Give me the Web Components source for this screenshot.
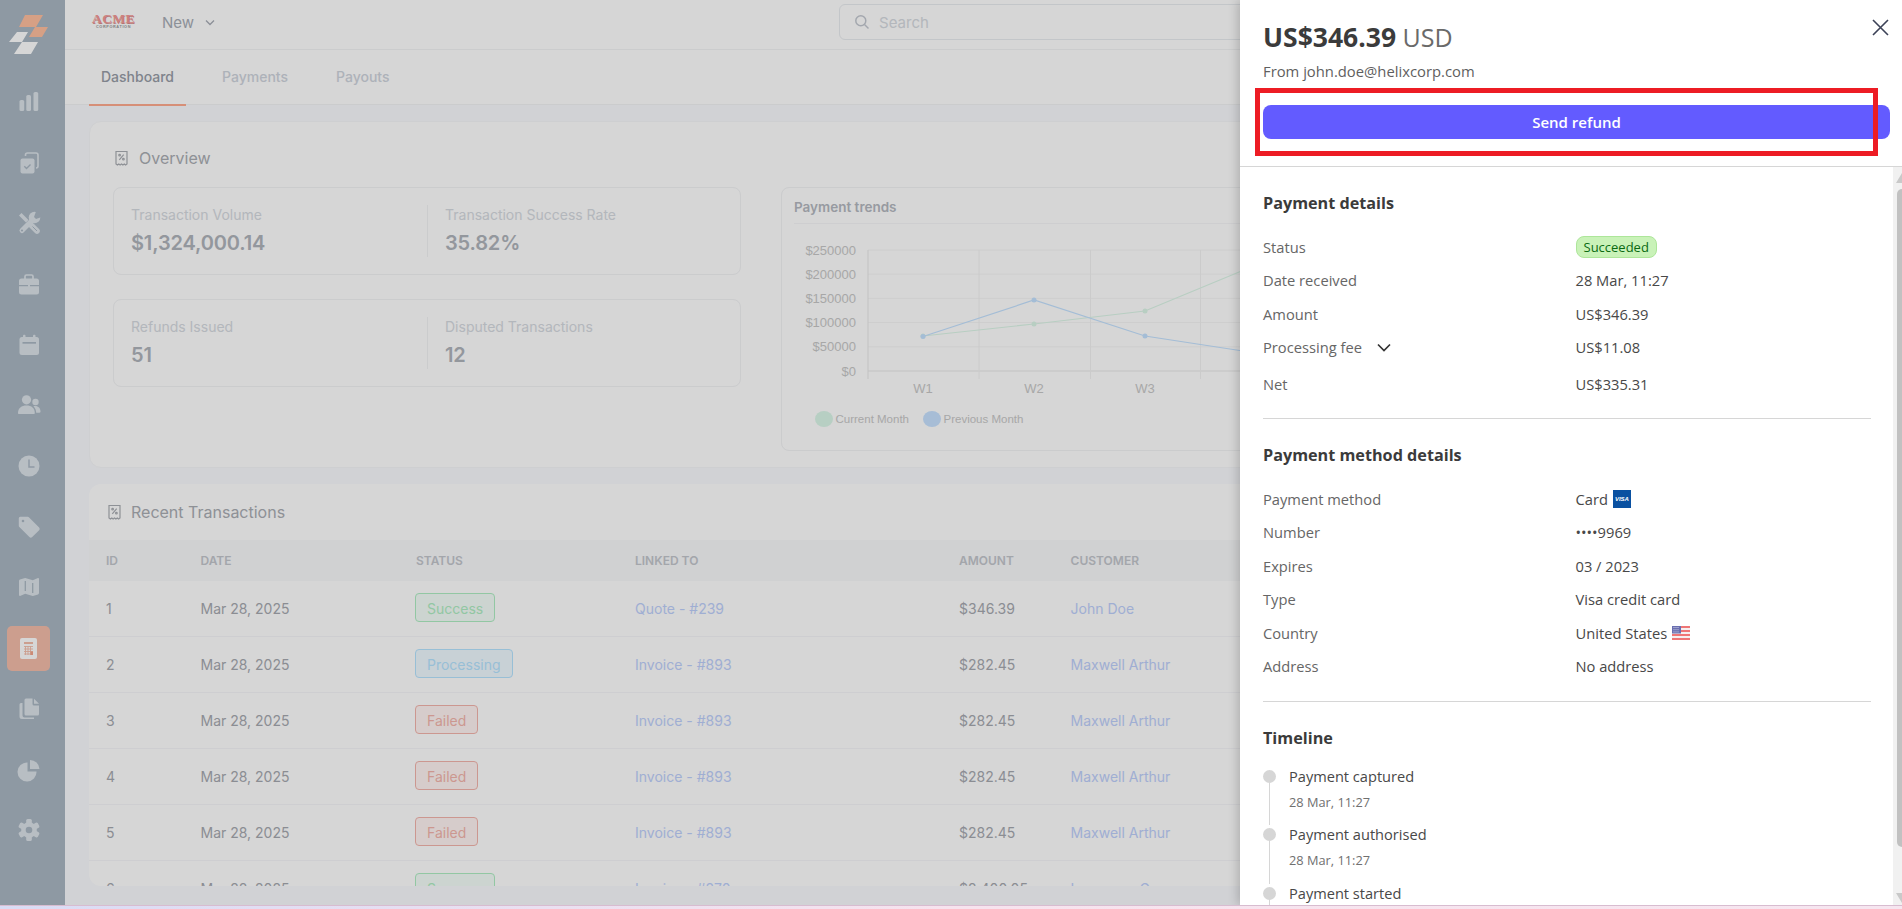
<!DOCTYPE html>
<html lang="en">
<head>
<meta charset="utf-8">
<title>Payments</title>
<style>
  html, body { margin: 0; height: 100%; overflow: hidden; }
  body {
    background: linear-gradient(90deg, #d9dcf5, #f7e3ee 50%, #f6e6f0);
    font-family: Inter, "Liberation Sans", sans-serif;
  }
</style>
</head>
<body>
<app-shell>
  <side-nav slot="side"></side-nav>
  <top-bar></top-bar>
  <page-tabs></page-tabs>
  <page-content>
    <overview-card></overview-card>
    <transactions-card></transactions-card>
  </page-content>
  <refund-drawer slot="drawer"></refund-drawer>
</app-shell>

<script>
const receiptIcon = `<svg width="13" height="16" viewBox="0 0 13 16" fill="none" stroke="currentColor" stroke-width="1.2" style="flex:none">
  <path d="M1 14V1.500h11V14l-1.400 1-1.300-1-1.400 1-1.400-1-1.400 1-1.300-1-1.400 1z"/>
  <path d="M4.300 9.800l4.400-5.200"/><circle cx="4.600" cy="5.200" r=".8"/><circle cx="8.400" cy="9.200" r=".8"/>
</svg>`;

const navIcons = {
  chart: `<rect x="2.500" y="10" width="4.700" height="11" rx="1.600"/><rect x="9.300" y="5" width="4.700" height="16" rx="1.600"/><rect x="16.500" y="2" width="4.700" height="19" rx="1.600"/>`,
  tasks: `<path d="M8.500 5V4a2 2 0 0 1 2-2h8.500a2 2 0 0 1 2 2v11a2 2 0 0 1-2 2" fill="none" stroke="currentColor" stroke-width="1.600"/><rect x="3.500" y="7.500" width="14" height="15" rx="2"/><path d="M7.300 15.200l2.200 2.200 4-4" fill="none" stroke="var(--cut)" stroke-width="1.400"/>`,
  tools: `<path d="M5 19.500L14.500 10" stroke="currentColor" stroke-width="5" stroke-linecap="round"/><circle cx="17.500" cy="6.500" r="5.800"/><path d="M17 6l2.500-7L26 5.500l-7 2.500z" fill="var(--cut)"/><circle cx="5" cy="19.500" r="1.100" fill="var(--cut)"/><path d="M2 4.500L4.500 2l7 7-2.500 2.500z"/><path d="M14.500 14.500l5.500 5.500" stroke="currentColor" stroke-width="5.600" stroke-linecap="round"/><path d="M15.500 15.500l4.500 4.500" stroke="var(--cut)" stroke-width="1"/>`,
  case: `<path d="M8 7V4.500A1.500 1.500 0 0 1 9.500 3h5A1.500 1.500 0 0 1 16 4.500V7" fill="none" stroke="currentColor" stroke-width="1.700"/><path d="M2 9a2.500 2.500 0 0 1 2.500-2.500h15A2.500 2.500 0 0 1 22 9v4H2z"/><path d="M2 14.300h20V20a2.500 2.500 0 0 1-2.500 2.500h-15A2.500 2.500 0 0 1 2 20z"/><rect x="11" y="12.300" width="2" height="3"/>`,
  calendar: `<rect x="2.500" y="4" width="19.500" height="18" rx="2.500"/><rect x="6" y="1.800" width="2.500" height="4" rx="1"/><rect x="16" y="1.800" width="2.500" height="4" rx="1"/><rect x="5.500" y="9" width="13.500" height="1.700" fill="var(--cut)"/>`,
  people: `<circle cx="9.500" cy="6.800" r="4.600"/><path d="M1 20c0-5 3.500-7.500 8.500-7.500S17.800 15 17.800 20c0 .6-.5 1-1 1H2c-.6 0-1-.4-1-1z"/><circle cx="18.500" cy="9" r="3.200"/><path d="M16.500 13.200c4-1 7 1.500 7 5.300 0 .8-.5 1.200-1 1.200h-3.300c0-2.500-1-4.700-2.700-6.500z"/>`,
  clock: `<circle cx="12" cy="12" r="10.500"/><path d="M12 5.500V13h5.500" fill="none" stroke="var(--cut)" stroke-width="1.500"/>`,
  tag: `<path d="M1.800 3.300A1.500 1.500 0 0 1 3.300 1.800h7.400a2 2 0 0 1 1.400.6l10 10a2 2 0 0 1 0 2.800l-6.900 6.900a2 2 0 0 1-2.800 0l-10-10a2 2 0 0 1-.6-1.400z"/><circle cx="6" cy="6" r="1.300" fill="var(--cut)"/>`,
  map: `<path d="M2 6a1.500 1.500 0 0 1 1-1.400L8.200 3l7.600 2.200L21 3.100c.5-.2 1 .2 1 .8v14.100a1.500 1.500 0 0 1-1 1.400L15.800 21l-7.600-2.200L3 20.900c-.5.200-1-.2-1-.8z"/><path d="M8.300 6v10M15.700 8v10" stroke="var(--cut)" stroke-width="1.300"/>`,
  copy: `<path d="M9 1.500h6.500V7a1.500 1.500 0 0 0 1.500 1.500h5V17a1.500 1.500 0 0 1-1.500 1.500H9A1.500 1.500 0 0 1 7.500 17V3A1.500 1.500 0 0 1 9 1.500z"/><path d="M17 1.800L22 6.700h-5z"/><path d="M5.500 6v12.500A2 2 0 0 0 7.500 20.500H17v1.500H5A2.500 2.500 0 0 1 2.500 19.500V7.500A1.500 1.500 0 0 1 4 6z"/>`,
  pie: `<path d="M10.500 4.500V13.500h9A9.500 9.500 0 1 1 10.500 4.500z"/><path d="M13 2a9.500 9.500 0 0 1 9.500 9H13z"/>`,
  gear: `<g transform="translate(12 12)"><rect x="-2.800" y="-11" width="5.600" height="22" rx="1.500"/><rect x="-2.800" y="-11" width="5.600" height="22" rx="1.500" transform="rotate(60)"/><rect x="-2.800" y="-11" width="5.600" height="22" rx="1.500" transform="rotate(120)"/><circle r="7.800"/><circle r="3.300" fill="var(--cut)"/></g>`
};

const calcIcon = `<svg width="17" height="21" viewBox="0 0 17 21">
  <rect width="17" height="21" rx="2" fill="#fff"/>
  <rect x="4" y="4" width="9" height="2" fill="#f4bdaa"/>
  <path d="M4 8.500h9M4 11h9M4 13.500h9M4 16h9M5.500 8v9M8 8v9M10.500 8v9" stroke="#f4bdaa" stroke-width=".9" fill="none"/>
  <rect x="10.500" y="13.500" width="2.500" height="3.500" fill="#f4a58c"/>
</svg>`;

class AppShell extends HTMLElement {
  connectedCallback() {
    this.attachShadow({ mode: 'open' });
    this.shadowRoot.innerHTML = `
      <style>
        :host {
          display: grid;
          grid-template-columns: 65px 1fr;
          height: 906px;
          position: relative;
          overflow: hidden;
          background: #fafbfe;
          border-bottom: 1px solid #d8bcd0;
          box-sizing: border-box;
        }
        .main { display: flex; flex-direction: column; min-width: 0; height: 906px; }
        .dim { position: absolute; inset: 0; background: rgba(0, 0, 0, .16); }
        .drawer { position: absolute; top: 0; right: 0; bottom: 0; width: 662px; display: block; }
      </style>
      <slot name="side"></slot>
      <div class="main"><slot></slot></div>
      <div class="dim"></div>
      <div class="drawer"><slot name="drawer"></slot></div>
    `;
  }
}

class SideNav extends HTMLElement {
  connectedCallback() {
    const names = Object.keys(navIcons);
    names.splice(9, 0, 'calc');
    const items = names.map(name => name === 'calc'
      ? `<a class="item active">${calcIcon}</a>`
      : `<a class="item"><svg width="24" height="24" viewBox="0 0 24 24" fill="currentColor">${navIcons[name]}</svg></a>`).join('');
    this.attachShadow({ mode: 'open' });
    this.shadowRoot.innerHTML = `
      <style>
        :host {
          display: block;
          --cut: #aab7c3;
          background: var(--cut);
          color: #dce3e9;
          padding-right: 8px;
          box-sizing: border-box;
        }
        .logo { height: 71.6px; display: block; }
        nav { display: grid; grid-auto-rows: 60.7px; justify-items: center; align-items: center; }
        .item { display: flex; align-items: center; justify-content: center; width: 43px; height: 45px; border-radius: 5px; }
        .active { background: #f4bdaa; }
      </style>
      <svg class="logo" width="57" viewBox="0 0 57 71.600">
        <path d="M19 27l6-12h18l-7 12zM29 37l6-10h13l-6 10z" fill="#ffbf9f"/>
        <path d="M9 42l8-10h11l-6 10zM14 54l8-12h16l-7 12z" fill="#fff"/>
      </svg>
      <nav>${items}</nav>
    `;
  }
}

class TopBar extends HTMLElement {
  connectedCallback() {
    this.attachShadow({ mode: 'open' });
    this.shadowRoot.innerHTML = `
      <style>
        :host {
          display: flex;
          align-items: center;
          flex: none;
          height: 50px;
          box-sizing: border-box;
          background: #fff;
          border-bottom: 1px solid #f2f3f5;
          padding-left: 28px;
          padding-bottom: 4px;
        }
        .logo { width: 41px; flex: none; display: flex; flex-direction: column; align-items: center; margin-top: -3px; }
        .acme { font: 700 13.500px/11px "Liberation Serif", serif; letter-spacing: .4px; color: #f59a98; text-shadow: .7px .7px #d98a8a; }
        .corp { margin-top: 1px; font: 700 3.800px/4px "Liberation Sans", sans-serif; letter-spacing: .62px; color: #9a9a9a; }
        .new { display: flex; align-items: center; gap: 10px; margin-left: 28px; font-size: 15px; color: #a7acb5; }
        .search {
          display: flex;
          align-items: center;
          gap: 9px;
          margin-left: 623px;
          width: 520px;
          height: 36px;
          align-self: flex-start;
          margin-top: 4px;
          box-sizing: border-box;
          padding-left: 14px;
          border: 1px solid #e9ecf0;
          border-radius: 6px;
          font-size: 15px;
          color: #d6dae1;
        }
      </style>
      <div class="logo"><span class="acme">ACME</span><span class="corp">CORPORATION</span></div>
      <div class="new">New
        <svg width="12" height="8" viewBox="0 0 12 8" fill="none" stroke="currentColor" stroke-width="1.300"><path d="M2 1.500l4 4 4-4"/></svg>
      </div>
      <div class="search">
        <svg width="16" height="16" viewBox="0 0 16 16" fill="none" stroke="#c3c8d0" stroke-width="1.500"><circle cx="6.800" cy="6.800" r="5"/><path d="M10.500 10.500l4 4"/></svg>
        Search
      </div>
    `;
  }
}

class PageTabs extends HTMLElement {
  connectedCallback() {
    this.attachShadow({ mode: 'open' });
    this.shadowRoot.innerHTML = `
      <style>
        :host {
          display: flex;
          flex: none;
          gap: 24px;
          height: 55px;
          box-sizing: border-box;
          padding-left: 24px;
          background: #fff;
          border-bottom: 1px solid #f2f3f5;
          font-size: 14px;
          font-weight: 500;
          color: #cfd4dd;
        }
        a { display: flex; align-items: center; height: 56px; box-sizing: border-box; padding: 0 12px 2px; border-bottom: 2px solid transparent; }
        .on { color: #989da7; border-color: #ffab90; }
      </style>
      <a class="on">Dashboard</a><a>Payments</a><a>Payouts</a>
    `;
  }
}

class PageContent extends HTMLElement {
  connectedCallback() {
    this.attachShadow({ mode: 'open' });
    this.shadowRoot.innerHTML = `
      <style>
        :host { display: flex; flex-direction: column; gap: 16px; padding: 16px 24px 0 24px; flex: 1; min-height: 0; }
      </style>
      <slot></slot>
    `;
  }
}

class StatPair extends HTMLElement {
  connectedCallback() {
    this.attachShadow({ mode: 'open' });
    this.shadowRoot.innerHTML = `
      <style>
        :host {
          display: grid;
          grid-template-columns: 1fr 1fr;
          height: 88px;
          box-sizing: border-box;
          padding: 17px 0;
          border: 1px solid #f2f3f5;
          border-radius: 8px;
        }
        div { padding-left: 17px; }
        div + div { border-left: 1px solid #f2f3f5; }
        span { display: block; font-size: 14px; line-height: 20px; color: #d6dae1; }
        b { display: block; margin-top: 4px; font-size: 20px; line-height: 28px; font-weight: 600; letter-spacing: -.15px; color: #b0b4bb; }
      </style>
      <div><span>${this.getAttribute('l1')}</span><b>${this.getAttribute('v1')}</b></div>
      <div><span>${this.getAttribute('l2')}</span><b>${this.getAttribute('v2')}</b></div>
    `;
  }
}

class TrendChart extends HTMLElement {
  connectedCallback() {
    const yTicks = ['$0', '$50000', '$100000', '$150000', '$200000', '$250000'];
    const yPos = i => 147 - i * 24.2;
    const xGrid = [86, 197, 308.500, 418.500, 530];
    const green = [[141, 112], [252, 100], [363, 87], [474, 41]];
    const blue = [[141, 112.500], [252, 76], [363, 112], [474, 129]];
    const line = (pts, c) => `<polyline points="${pts.join(' ')}" fill="none" stroke="${c}" stroke-width="1.200"/>` +
      pts.map(p => `<circle cx="${p[0]}" cy="${p[1]}" r="2.500" fill="${c}"/>`).join('');
    this.attachShadow({ mode: 'open' });
    this.shadowRoot.innerHTML = `
      <style>
        :host {
          display: block;
          height: 264px;
          box-sizing: border-box;
          border: 1px solid #f2f3f5;
          border-radius: 8px;
          overflow: hidden;
          flex: 1;
        }
        h3 { margin: 0 12px; height: 36px; box-sizing: border-box; padding-top: 9px; font-size: 13.500px; line-height: 20px; font-weight: 600; color: #b4b8c0; border-bottom: 1px solid #f6f6f8; }
        svg { display: block; font-family: "Liberation Sans", sans-serif; }
        text { fill: #c8c8c8; font-size: 13px; }
      </style>
      <h3>Payment trends</h3>
      <svg width="1074" height="226" viewBox="0 0 1074 226">
        ${yTicks.map((t, i) => `<line x1="86" x2="640" y1="${yPos(i)}" y2="${yPos(i)}" stroke="${i ? '#f6f6f6' : '#e8e8e8'}"/>
          <text x="74" y="${yPos(i) + 4.500}" text-anchor="end">${t}</text>`).join('')}
        ${xGrid.map(x => `<line x1="${x}" x2="${x}" y1="26" y2="155" stroke="${x === 86 ? '#e8e8e8' : '#f2f2f2'}"/>`).join('')}
        ${['W1', 'W2', 'W3', 'W4'].map((t, i) => `<text x="${141 + i * 111}" y="169" text-anchor="middle">${t}</text>`).join('')}
        ${line(green, '#dcf6e8')}
        ${line(blue, '#c4e2ff')}
        <ellipse cx="42" cy="195" rx="9" ry="8" fill="#dbf7e9"/>
        <text x="53.500" y="199" style="font-size:11.500px">Current Month</text>
        <ellipse cx="150" cy="195" rx="9" ry="8" fill="#c8e2ff"/>
        <text x="161.500" y="199" style="font-size:11.500px">Previous Month</text>
      </svg>
    `;
  }
}

class OverviewCard extends HTMLElement {
  connectedCallback() {
    this.attachShadow({ mode: 'open' });
    this.shadowRoot.innerHTML = `
      <style>
        :host {
          display: block;
          height: 347px;
          flex: none;
          box-sizing: border-box;
          padding: 24px 23px 0;
          background: #fff;
          border: 1px solid #f6f7fa;
          border-radius: 12px;
        }
        h2 { display: flex; align-items: center; gap: 11px; margin: 0 0 17px 2px; font-size: 16px; line-height: 24px; font-weight: 400; color: #aaadb3; }
        .row { display: flex; gap: 40px; }
        .stats { width: 628px; flex: none; display: flex; flex-direction: column; gap: 24px; }
      </style>
      <h2>${receiptIcon} Overview</h2>
      <div class="row">
        <div class="stats">
          <stat-pair l1="Transaction Volume" v1="$1,324,000.14" l2="Transaction Success Rate" v2="35.82%"></stat-pair>
          <stat-pair l1="Refunds Issued" v1="51" l2="Disputed Transactions" v2="12"></stat-pair>
        </div>
        <trend-chart></trend-chart>
      </div>
    `;
  }
}

class StatusBadge extends HTMLElement {
  connectedCallback() {
    const colors = {
      Success: ['#f4fdf8', '#aeeec3'],
      Processing: ['#eff9ff', '#b5e4ff'],
      Failed: ['#fff4f2', '#f4b4ac']
    }[this.textContent.trim()];
    this.attachShadow({ mode: 'open' });
    this.shadowRoot.innerHTML = `
      <style>
        :host {
          display: inline-block;
          height: 29px;
          box-sizing: border-box;
          padding: 0 11px;
          line-height: 29px;
          margin: 0 0 3px -1px;
          vertical-align: middle;
          border: 1px solid ${colors[1]};
          border-radius: 4px;
          background: ${colors[0]};
          color: ${colors[1]};
        }
      </style>
      <slot></slot>
    `;
  }
}

class TransactionsCard extends HTMLElement {
  connectedCallback() {
    const rows = [
      [1, 'Success', 'Quote - #239', '$346.39', 'John Doe'],
      [2, 'Processing', 'Invoice - #893', '$282.45', 'Maxwell Arthur'],
      [3, 'Failed', 'Invoice - #893', '$282.45', 'Maxwell Arthur'],
      [4, 'Failed', 'Invoice - #893', '$282.45', 'Maxwell Arthur'],
      [5, 'Failed', 'Invoice - #893', '$282.45', 'Maxwell Arthur'],
      [6, 'Success', 'Invoice - #270', '$2,400.05', 'Lawrence Green']
    ];
    this.attachShadow({ mode: 'open' });
    this.shadowRoot.innerHTML = `
      <style>
        :host {
          display: block;
          height: 402px;
          flex: none;
          overflow: hidden;
          background: #fff;
          border-radius: 12px;
        }
        h2 { display: flex; align-items: center; gap: 10px; margin: 0; padding-left: 19px; height: 56px; font-size: 16px; font-weight: 400; color: #aaadb3; }
        table { width: 100%; table-layout: fixed; border-collapse: collapse; font-size: 14px; color: #a6a9b0; }
        th { height: 41px; padding: 0 0 0 17px; text-align: left; font-size: 12px; font-weight: 600; text-transform: uppercase; color: #c3c6cc; background: #f8f9fb; }
        td { height: 55px; padding: 0 0 0 17px; border-bottom: 1px solid #f6f6f9; }
        .link { color: #bed0fc; }
      </style>
      <h2>${receiptIcon} Recent Transactions</h2>
      <table>
        <colgroup><col style="width:94.500px"><col style="width:215.500px"><col style="width:219px"><col style="width:324px"><col style="width:111.600px"><col></colgroup>
        <thead><tr><th>ID</th><th>Date</th><th>Status</th><th>Linked to</th><th>Amount</th><th>Customer</th></tr></thead>
        <tbody>
          ${rows.map(r => `<tr>
            <td>${r[0]}</td><td>Mar 28, 2025</td>
            <td><status-badge>${r[1]}</status-badge></td>
            <td class="link">${r[2]}</td><td>${r[3]}</td><td class="link">${r[4]}</td>
          </tr>`).join('')}
        </tbody>
      </table>
    `;
  }
}

class DetailRow extends HTMLElement {
  connectedCallback() {
    this.attachShadow({ mode: 'open' });
    this.shadowRoot.innerHTML = `
      <style>
        :host { display: grid; grid-template-columns: 312.500px 1fr; height: 33.500px; box-sizing: border-box; padding-bottom: 2px; align-items: center; font-size: 14.700px; color: #484848; }
        .label { display: flex; align-items: center; gap: 15px; color: #666; }
        .value { display: flex; align-items: center; gap: 5px; }
      </style>
      <div class="label">${this.getAttribute('label')}<slot name="extra"></slot></div>
      <div class="value"><slot></slot></div>
    `;
  }
}

class TimelineItem extends HTMLElement {
  connectedCallback() {
    this.attachShadow({ mode: 'open' });
    this.shadowRoot.innerHTML = `
      <style>
        :host { display: flex; gap: 13px; height: 58.500px; }
        .rail { width: 13px; flex: none; display: flex; flex-direction: column; align-items: center; padding-top: 3px; box-sizing: border-box; }
        .dot { width: 13px; height: 13px; flex: none; border-radius: 50%; background: #d6d6d6; }
        .line { width: 1px; flex: 1; background: #d6d6d6; }
        .title { margin-top: -1px; font-size: 14.600px; line-height: 20px; color: #484848; }
        .date { margin-top: 7px; font-size: 12.800px; line-height: 18px; color: #707070; }
      </style>
      <div class="rail"><div class="dot"></div><div class="line"></div></div>
      <div><div class="title">${this.getAttribute('title')}</div><div class="date">28 Mar, 11:27</div></div>
    `;
  }
}

class ScrollRail extends HTMLElement {
  connectedCallback() {
    this.attachShadow({ mode: 'open' });
    this.shadowRoot.innerHTML = `
      <style>
        :host { display: flex; flex-direction: column; align-items: flex-end; flex: none; width: 9px; background: #f1f1f1; }
        svg { display: block; flex: none; }
        .thumb { flex: none; width: 5px; height: 658px; margin-top: 6px; background: #c1c1c1; border-radius: 5px 0 0 5px; }
      </style>
      <svg width="6" height="10" viewBox="0 0 6 10" style="margin-top:6px"><path d="M6 0v10H0z" fill="#c9c9c9"/></svg>
      <div class="thumb"></div>
      <svg width="6" height="10" viewBox="0 0 6 10" style="margin-top:46px"><path d="M6 10V0H0z" fill="#c9c9c9"/></svg>
    `;
  }
}

class RefundDrawer extends HTMLElement {
  connectedCallback() {
    this.attachShadow({ mode: 'open' });
    this.shadowRoot.innerHTML = `
      <style>
        :host {
          display: flex;
          flex-direction: column;
          height: 100%;
          position: relative;
          background: #fff;
          box-shadow: -2px 0 10px rgba(0, 0, 0, .2);
          font-family: "Open Sans", "Liberation Sans", sans-serif;
        }
        header { flex: none; height: 167px; box-sizing: border-box; padding: 20px 12px 0 23px; border-bottom: 1px solid #d6d6d6; }
        .total { font-size: 25px; line-height: 34px; color: #6a6a6a; }
        .total b { font-size: 26.500px; font-weight: 700; color: #3b3b3b; }
        .from { margin-top: 6px; font-size: 14.800px; line-height: 22px; color: #5f5f5f; }
        .send { display: block; width: 100%; height: 34px; margin-top: 23px; border: 0; border-radius: 8px; background: #635bff; color: #fff; font: 600 15px "Open Sans", sans-serif; }
        .close { position: absolute; top: 19px; right: 13px; }
        .mark { position: absolute; left: 15px; top: 88px; width: 623px; height: 68px; box-sizing: border-box; border: 5px solid #ed1c24; pointer-events: none; }
        .scroll { flex: 1; min-height: 0; display: flex; }
        .body { flex: 1; min-width: 0; overflow: hidden; padding: 24px 22px 0 23px; }
        h3 { margin: 0 0 16px; font-size: 16.200px; line-height: 24px; font-weight: 700; color: #3b3b3b; }
        hr { margin: 16.500px 0 24px; border: 0; border-top: 1px solid #d6d6d6; }
        .ok { display: inline-block; height: 22px; box-sizing: border-box; padding: 0 7px; line-height: 20px; font-size: 13px; background: #c9f2b8; border: 1px solid #ade69a; border-radius: 8px; color: #0a6a12; }
        .visa { display: inline-flex; align-items: center; justify-content: center; width: 18px; height: 18px; background: #0a51a1; color: #fff; font: italic 700 6px "Liberation Sans", sans-serif; }
        .tl { margin-top: 17px; padding-bottom: 10px; }
      </style>
      <header>
        <div class="total"><b>US$346.39</b> USD</div>
        <div class="from">From john.doe@helixcorp.com</div>
        <button class="send">Send refund</button>
      </header>
      <svg class="close" width="17" height="17" viewBox="0 0 17 17" stroke="#3c4257" stroke-width="1.600"><path d="M1 1l15 15M16 1L1 16"/></svg>
      <div class="mark"></div>
      <div class="scroll">
        <div class="body">
          <h3>Payment details</h3>
          <detail-row label="Status"><span class="ok">Succeeded</span></detail-row>
          <detail-row label="Date received">28 Mar, 11:27</detail-row>
          <detail-row label="Amount">US$346.39</detail-row>
          <detail-row label="Processing fee" style="height:36.500px;padding-bottom:5px">
            <svg slot="extra" width="14" height="9" viewBox="0 0 14 9" fill="none" stroke="#333" stroke-width="1.700"><path d="M1 1.500l6 6 6-6"/></svg>
            US$11.08
          </detail-row>
          <detail-row label="Net">US$335.31</detail-row>
          <hr>
          <h3>Payment method details</h3>
          <detail-row label="Payment method">Card <span class="visa">VISA</span></detail-row>
          <detail-row label="Number">••••9969</detail-row>
          <detail-row label="Expires">03 / 2023</detail-row>
          <detail-row label="Type">Visa credit card</detail-row>
          <detail-row label="Country">United States
            <svg width="18" height="14" viewBox="0 0 18 14">
              <rect width="18" height="14" rx="1.500" fill="#f6f0f0"/>
              <path d="M0 1h18M0 5h18M0 9h18M0 13h18" stroke="#ef7676" stroke-width="2"/>
              <rect width="9" height="7.500" fill="#6a6fb0"/>
              <path d="M1.500 1.500h6M1.500 3.700h6M1.500 5.900h6" stroke="#dfe0f0" stroke-width=".9" stroke-dasharray="1 1"/>
            </svg>
          </detail-row>
          <detail-row label="Address">No address</detail-row>
          <hr>
          <h3 style="margin-bottom:0">Timeline</h3>
          <div class="tl">
            <timeline-item title="Payment captured"></timeline-item>
            <timeline-item title="Payment authorised"></timeline-item>
            <timeline-item title="Payment started"></timeline-item>
          </div>
        </div>
        <scroll-rail></scroll-rail>
      </div>
    `;
  }
}

customElements.define('app-shell', AppShell);
customElements.define('side-nav', SideNav);
customElements.define('top-bar', TopBar);
customElements.define('page-tabs', PageTabs);
customElements.define('page-content', PageContent);
customElements.define('stat-pair', StatPair);
customElements.define('trend-chart', TrendChart);
customElements.define('overview-card', OverviewCard);
customElements.define('status-badge', StatusBadge);
customElements.define('transactions-card', TransactionsCard);
customElements.define('detail-row', DetailRow);
customElements.define('timeline-item', TimelineItem);
customElements.define('scroll-rail', ScrollRail);
customElements.define('refund-drawer', RefundDrawer);
</script>
</body>
</html>
